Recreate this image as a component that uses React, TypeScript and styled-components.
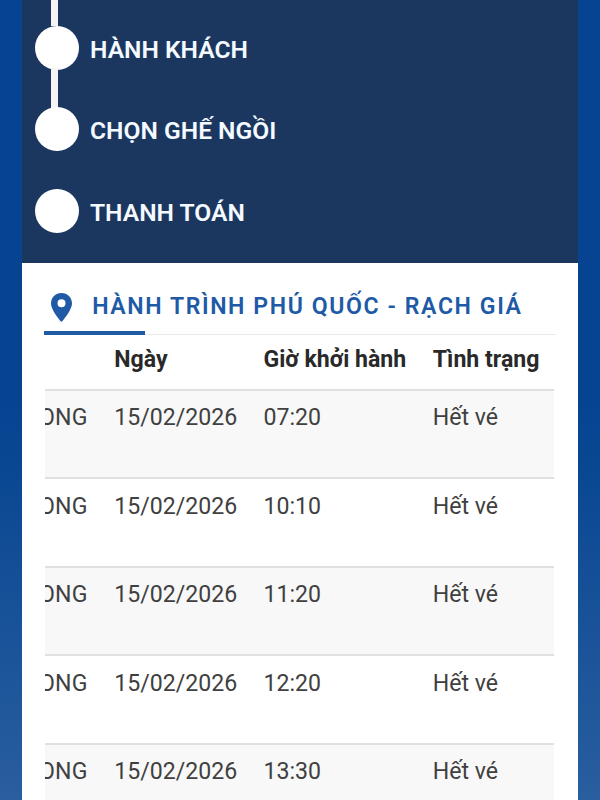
import React from "react";
import styled, { createGlobalStyle } from "styled-components";

const GlobalStyle = createGlobalStyle`
  *, *::before, *::after { box-sizing: border-box; }
  html, body { margin: 0; height: 100%; overflow: hidden; }
  body { font-family: Roboto, "Noto Sans", sans-serif; }
`;

const Page = styled.div`
  width: 600px;
  height: 800px;
  padding: 0 22px;
  overflow: hidden;
  background: linear-gradient(180deg, #064391 0, #064391 400px, #0b4893 480px, #295e9f 800px);
`;

const Steps = styled.ol`
  margin: 0;
  height: 263px;
  padding: 0 0 0 13px;
  list-style: none;
  background: #1b375f;
  overflow: hidden;
`;

const Lead = styled.div`
  width: 7px;
  height: 26px;
  margin-left: 16px;
  background: #f5f5f5;
`;

const Step = styled.li`
  display: grid;
  grid-template-columns: 43.5px 1fr;
  column-gap: 11.5px;
  height: 81.3px;
  grid-template-rows: 44px 1fr;
`;

const Dot = styled.span`
  width: 43.5px;
  height: 44px;
  border-radius: 50%;
  background: #fff;
`;

const Connector = styled.span`
  width: 7px;
  margin: -2px 0 -2px 16px;
  background: #f5f5f5;
`;

const StepLabel = styled.span`
  color: #f4faff;
  font-size: 24.6px;
  font-weight: 600;
  line-height: 48px;
  white-space: nowrap;
`;

const Card = styled.main`
  height: 537px;
  padding: 0 22px;
  background: #fff;
`;

const Heading = styled.header`
  display: flex;
  height: 72px;
  padding: 26px 0 0 6px;
  border-bottom: 1px solid #e9e9e9;
`;

const Pin = styled.svg`
  width: 21px;
  height: 29px;
  margin: 4px 20.7px 0 0.5px;
  fill: #205aa7;
`;

const Title = styled.h1`
  margin: 0;
  color: #205aa7;
  font-size: 23.1px;
  font-weight: 600;
  line-height: 35px;
  letter-spacing: 1.58px;
  white-space: nowrap;
`;

const Accent = styled.div`
  width: 101px;
  height: 4px;
  margin-top: -4px;
  background: #205aa7;
`;

const TableScroller = styled.div`
  margin: 0 2px 0 1px;
  height: 465px;
  overflow: hidden;
`;

const Row = styled.div<{ $head?: boolean; $striped?: boolean }>`
  display: grid;
  grid-template-columns: 69.3px 149.2px 169.3px 1fr;
  height: ${(p) => (p.$head ? 54 : 88.4)}px;
  padding-top: ${(p) => (p.$head ? 9 : 11.4)}px;
  border-top: ${(p) => (p.$head ? "0" : "2px solid #e0e0e0")};
  background: ${(p) => (p.$striped ? "#f8f8f8" : "#fff")};
`;

const Cell = styled.span<{ $head?: boolean }>`
  color: ${(p) => (p.$head ? "#292929" : "#404040")};
  font-size: 23.1px;
  font-weight: ${(p) => (p.$head ? 700 : 400)};
  line-height: 32px;
  white-space: nowrap;
`;

const ClippedCell = styled(Cell)`
  display: flex;
  justify-content: flex-end;
  width: 42.5px;
  overflow: hidden;
  letter-spacing: 0.1px;
`;

const steps = [
  { label: "HÀNH KHÁCH", connected: true },
  { label: "CHỌN GHẾ NGỒI", connected: false },
  { label: "THANH TOÁN", connected: false },
];

const departures = ["07:20", "10:10", "11:20", "12:20", "13:30"];

export default function App() {
  return (
    <>
      <GlobalStyle />
      <Page>
        <Steps>
          <Lead />
          {steps.map((step) => (
            <Step key={step.label}>
              <Dot />
              <StepLabel>{step.label}</StepLabel>
              {step.connected && <Connector />}
            </Step>
          ))}
        </Steps>
        <Card>
          <Heading>
            <Pin viewBox="0 0 20 28" preserveAspectRatio="none">
              <path
                fillRule="evenodd"
                d="M10 0C4.3 0 0 4.3 0 9.9C0 17.2 10 28 10 28S20 17.2 20 9.9C20 4.3 15.7 0 10 0ZM10 13.7A3.8 3.8 0 1 1 10 6.1A3.8 3.8 0 0 1 10 13.7Z"
              />
            </Pin>
            <Title>HÀNH TRÌNH PHÚ QUỐC - RẠCH GIÁ</Title>
          </Heading>
          <Accent />
          <TableScroller>
            <Row $head>
              <span />
              <Cell $head>Ngày</Cell>
              <Cell $head>Giờ khởi hành</Cell>
              <Cell $head>Tình trạng</Cell>
            </Row>
            {departures.map((time, index) => (
              <Row key={time} $striped={index % 2 === 0}>
                <ClippedCell>ONG</ClippedCell>
                <Cell>15/02/2026</Cell>
                <Cell>{time}</Cell>
                <Cell>Hết vé</Cell>
              </Row>
            ))}
          </TableScroller>
        </Card>
      </Page>
    </>
  );
}
